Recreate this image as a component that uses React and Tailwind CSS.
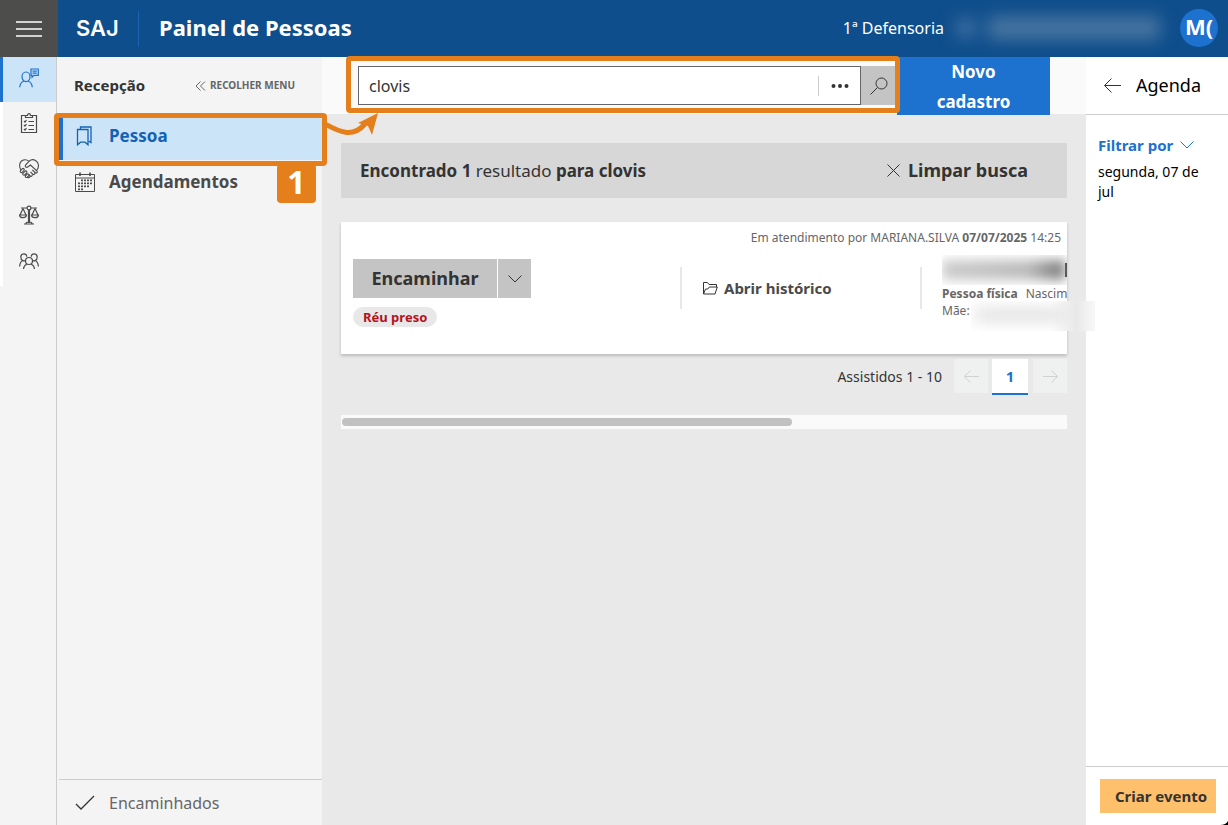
const railItems = [
  { id: 'recepcao', label: 'Recepção', Icon: PersonChatIcon, active: true },
  { id: 'tarefas', label: 'Tarefas', Icon: ClipboardIcon },
  { id: 'acordos', label: 'Acordos', Icon: HandshakeIcon },
  { id: 'processos', label: 'Processos', Icon: ScalesIcon },
  { id: 'equipe', label: 'Equipe', Icon: PeopleIcon },
];

function Svg({ children, size = 20, width, height, box = '0 0 20 20', stroke = 1, className = '' }) {
  return (
    <svg
      width={width || size}
      height={height || size}
      viewBox={box}
      fill="none"
      stroke="currentColor"
      strokeWidth={stroke}
      className={`shrink-0 ${className}`}
      aria-hidden="true"
    >
      {children}
    </svg>
  );
}

function PersonChatIcon() {
  return (
    <Svg stroke={1.2}>
      <ellipse cx="7" cy="8.800" rx="4" ry="4.800" />
      <path d="M.7 19.300c.3-3.300 2-5.500 4.300-6.300M9 13c2.500.8 4 3 4.300 6.300" />
      <path d="M12 1h7.300v6.300h-4.300l-2 2v-2h-1zM13.500 3.200h4.300M13.500 5.200h4.300" />
    </Svg>
  );
}

function ClipboardIcon() {
  return (
    <Svg stroke={1.2}>
      <path d="M6.500 2.500h-4v17h15v-17h-4M6.500 4.500v-2h2c0-2.500 3-2.500 3 0h2v2z" />
      <path d="M5 8l1 1 1.500-2M5 12l1 1 1.500-2M5 16l1 1 1.500-2M9.500 8.500h5.500M9.500 12.500h5.500M9.500 16.500h5.500" />
    </Svg>
  );
}

function HandshakeIcon() {
  return (
    <Svg stroke={1.1}>
      <path d="M2 11C-.5 7 .5 2 4.500 1c2-.5 4 0 5.500 1.300C12 .5 14.500.3 16.500 1.500 20 3.500 20.500 8 17.500 11.500" />
      <path d="M10 2.300L6.500 6c-1 1.500.8 3 2.200 2l2.800-2 6.500 6c1 1.300-.6 2.700-1.700 1.700l-3-2.700M15.500 13.500c1 1.300-.5 2.700-1.700 1.700l-2.300-2.200M13 15.500c.7 1.300-.7 2.500-1.800 1.500l-1.500-1.500M11 17.500c-.5 1.300-2 1.500-3 .5" />
      <path d="M1.500 11.500l1.700-1.700c1.300-1 2.600.3 1.800 1.500l-1.700 1.900c-1.300 1-2.800-.4-1.800-1.700zM4 14.300l1.900-2c1.300-1 2.600.3 1.700 1.500l-1.700 2c-1.300 1-2.800-.3-1.900-1.500zM6.500 16.800l1.400-1.500c1.300-1 2.500.3 1.700 1.500l-1.300 1.400c-1.200.9-2.500-.3-1.800-1.400z" />
    </Svg>
  );
}

function ScalesIcon() {
  return (
    <Svg stroke={1.2}>
      <circle cx="10" cy="3" r="1.900" />
      <path d="M2 3h6M12 3h6M9.500 5v13M10.500 5v13M5 19h10M7 18.500c0-1 1.500-1.500 3-1.500s3 .5 3 1.500" />
      <path d="M4 3.500L1 10M4 3.500L7 10M.5 10h7c-.3 3.500-6.700 3.500-7 0zM16 3.500L13 10M16 3.500l3 6.500M12.500 10h7c-.3 3.500-6.700 3.500-7 0z" />
    </Svg>
  );
}

function PeopleIcon() {
  return (
    <Svg stroke={1.200}>
      <circle cx="10" cy="10" r="3.500" />
      <path d="M4.500 18c.2-2.500 1.500-4 3.300-4.700M15.500 18c-.2-2.500-1.500-4-3.300-4.700" />
      <path d="M7.800 5.800C7.500 1.500 1.800 2 1.800 6c0 1.800.8 3 1.900 3.500C1.800 10.500.8 12.500.6 15.500M3.700 9.500c1 .6 2 .6 2.800 0M12.200 5.800c.3-4.300 6-3.800 6 .2 0 1.800-.8 3-1.900 3.500 1.900 1 2.900 3 3.100 6M16.300 9.500c-1 .6-2 .6-2.800 0" />
    </Svg>
  );
}

function BookmarkIcon() {
  return (
    <Svg stroke={1.300} className="text-[#1263b5]">
      <path d="M2.500 3.500h10.500v15.300l-3-2.600h-4.500l-3 2.600z" />
      <path d="M5.500 3V1h10.500v15.500l-2.500-1.500" />
    </Svg>
  );
}

function CalendarIcon() {
  const days = [
    [7, 8], [10, 8], [13, 8], [16, 8],
    [4, 11], [7, 11], [10, 11], [13, 11], [16, 11],
    [4, 14], [7, 14], [10, 14], [13, 14],
    [4, 17], [7, 17],
  ];
  return (
    <Svg>
      <path d="M.5 2.500h19v17H.5zM.5 6h19" />
      <path d="M5 .5v3.500M15 .5v3.500" strokeWidth="1.600" />
      {days.map(([x, y]) => (
        <rect key={`${x}-${y}`} x={x - 1} y={y - 0.500} width="2" height="1.700" fill="currentColor" stroke="none" />
      ))}
    </Svg>
  );
}

function FolderIcon() {
  return (
    <Svg width={15} height={13} box="0 0 15 13" className="text-[#333]">
      <path d="M.5 12V.5h4l1.500 2h7.500v2.500M.5 12h11.500l2.300-7h-8l-1.500 2h-2.300z" />
    </Svg>
  );
}

function ChevronIcon({ className }) {
  return (
    <Svg width={14} height={8} box="0 0 14 8" className={className}>
      <path d="M.5.5l6.500 6.500L13.500.5" />
    </Svg>
  );
}

function ArrowIcon({ right = false, width = 17, className = '' }) {
  return (
    <Svg width={width} height={15} box="0 0 17 15" className={className}>
      {right ? <path d="M0 7.500h16M9.500.5l7 7-7 7" /> : <path d="M17 7.500H1M7.500.5l-7 7 7 7" />}
    </Svg>
  );
}

function Header() {
  return (
    <header className="flex h-[57px] shrink-0 items-center bg-[#0f4e8c] text-white">
      <button type="button" aria-label="Menu" className="flex h-full w-[58px] items-center justify-center bg-[#4d4d4b]">
        <Svg width={26} height={16} box="0 0 26 16" stroke={1.600}>
          <path d="M0 1h26M0 8h26M0 15h26" />
        </Svg>
      </button>
      <div className="flex h-9 w-[81px] items-center border-r border-[#1c62b0] pl-[18px] font-['Inter',sans-serif] text-[22px] font-semibold">
        SAJ
      </div>
      <h1 className="ml-5 pb-0.5 text-[22px] font-bold">Painel de Pessoas</h1>
      <div className="ml-auto flex items-center pr-2.5 pb-0.5">
        <span className="text-base">1ª Defensoria</span>
        <div className="mr-4 ml-2 flex h-9 w-[212px] items-center gap-3 px-1 blur-[8px]">
          <div className="h-5 w-5 bg-[#3a6da0]" />
          <div className="h-6 flex-1 bg-[#45739f]" />
        </div>
        <button type="button" className="size-[38px] overflow-hidden rounded-full bg-[#1d71cf] pb-0.5 text-[22px] font-bold">
          M(
        </button>
      </div>
    </header>
  );
}

function Rail() {
  return (
    <nav className="w-[57px] shrink-0 border-r border-[#ccc] bg-[#f4f4f4]">
      {railItems.map(({ id, label, Icon, active }) => (
        <a
          key={id}
          href={`#${id}`}
          aria-label={label}
          className={
            active
              ? 'flex h-[45px] items-center border-l-3 border-[#1d71cf] bg-[#cce4f8] pb-1 pl-4 text-[#1d71cf]'
              : 'flex h-[46px] items-center border-l-3 border-white pb-1 pl-4 text-[#4a4a4a]'
          }
        >
          <Icon />
        </a>
      ))}
    </nav>
  );
}

function Sidebar() {
  return (
    <nav className="relative z-20 flex w-[265px] shrink-0 flex-col bg-[#f4f4f4] pl-0.5 text-[#4a4a4a]">
      <div className="flex h-[57px] items-center pl-[15px]">
        <h2 className="text-[15px] font-bold text-[#333]">Recepção</h2>
        <button type="button" className="mr-[27px] ml-auto flex items-center gap-1 text-[10px] font-bold text-[#666]">
          <Svg width={11} height={10} box="0 0 11 10">
            <path d="M5.500.5L1 5l4.500 4.500M10 .5L5.500 5l4.500 4.500" />
          </Svg>
          RECOLHER MENU
        </button>
      </div>

      <div className="relative">
        <a href="#pessoa" className="flex h-[46px] items-center gap-[14px] border-l-4 border-[#1d71cf] bg-[#cce4f8] pb-0.5 pl-3 text-[17px] font-bold text-[#1263b5]">
          <BookmarkIcon />
          Pessoa
        </a>
        <div className="pointer-events-none absolute -inset-x-[5px] -top-px h-[53px] rounded-sm border-5 border-[#e57f1b]" />
        <span className="absolute top-[50px] right-1.5 z-10 flex h-[39px] w-[39px] items-center justify-center rounded-sm bg-[#e57f1b] pb-1 font-['Open_Sans',sans-serif] text-[32px] font-bold text-white">
          1
        </span>
        <svg width="56" height="30" viewBox="0 0 56 30" fill="none" className="pointer-events-none absolute -top-1 -right-[58px] z-20 text-[#e57f1b]">
          <path d="M1 14C14 21 28 29 41 14" stroke="currentColor" strokeWidth="5" />
          <path d="M54 3L34 13l10 3 4 9z" fill="currentColor" />
        </svg>
      </div>
      <a href="#agendamentos" className="flex h-[46px] items-center gap-[14px] pb-0.5 pl-4 text-[17px] font-bold">
        <CalendarIcon />
        Agendamentos
      </a>

      <a href="#encaminhados" className="mt-auto flex h-[46px] items-center gap-[14px] border-t border-[#ccc] pl-4 text-base text-[#666]">
        <Svg stroke={1.300} className="text-[#333]">
          <path d="M1 11l5 5L19 3" />
        </Svg>
        Encaminhados
      </a>
    </nav>
  );
}

function SearchBar() {
  return (
    <div className="flex h-[57px] items-center bg-[#fafafa] pr-9 pl-9">
      <form className="relative flex h-[39px] flex-1" role="search">
        <div className="flex flex-1 items-center border border-[#666] bg-white">
          <input
            type="text"
            aria-label="Buscar pessoa"
            defaultValue="clovis"
            className="h-full min-w-0 flex-1 pl-[10px] text-base text-[#333] outline-none"
          />
          <button type="button" aria-label="Mais opções" className="flex h-5 w-[42px] items-center justify-center border-l border-[#ccc] text-[#333]">
            <svg width="18" height="4" viewBox="0 0 18 4" fill="currentColor">
              <circle cx="2.500" cy="2" r="2" />
              <circle cx="9" cy="2" r="2" />
              <circle cx="15.500" cy="2" r="2" />
            </svg>
          </button>
        </div>
        <button type="button" aria-label="Buscar" className="flex w-9 items-center justify-center bg-[#c4c4c4] text-[#333]">
          <Svg size={18} box="0 0 18 18">
            <circle cx="11.500" cy="6.500" r="5.500" />
            <path d="M7.500 10.500L.5 17.500" />
          </Svg>
        </button>
        <div className="pointer-events-none absolute -top-2.5 -right-[3px] -bottom-2 -left-3 z-10 rounded-sm border-5 border-[#e57f1b]" />
      </form>
      <button type="button" className="h-[58px] w-[153px] self-start bg-[#1d71cf] px-6 text-[17px] leading-[30px] font-bold text-white">
        Novo cadastro
      </button>
    </div>
  );
}

function PersonCard() {
  return (
    <article className="mt-6 h-[132px] bg-white shadow-[0_2px_3px_#bbb]">
      <p className="pt-2 pr-1.5 text-right text-xs leading-4 text-[#666]">
        Em atendimento por MARIANA.SILVA <b>07/07/2025</b> 14:25
      </p>
      <div className="flex pt-[13px] pl-3">
        <div className="min-w-[178px] flex-1">
          <div className="flex h-[39px] gap-px text-[#333]">
            <button type="button" className="w-36 bg-[#c4c4c4] text-[18px] font-bold">Encaminhar</button>
            <button type="button" aria-label="Mais ações" className="flex w-[33px] items-center justify-center bg-[#c4c4c4]">
              <ChevronIcon />
            </button>
          </div>
          <span className="mt-[9px] inline-flex h-5 items-center rounded-full bg-[#e8e8e8] px-[10px] pt-0.5 text-[13px] font-bold text-[#b5121b]">
            Réu preso
          </span>
        </div>
        <div className="mt-2 flex h-[42px] w-[240px] items-center border-l-2 border-[#e8e8e8] pl-[21px]">
          <button type="button" className="flex items-center gap-1.5 text-[15px] font-bold text-[#4a4a4a]">
            <FolderIcon />
            Abrir histórico
          </button>
        </div>
        <div className="mt-2 h-[42px] w-[147px] border-l-2 border-[#e8e8e8] pl-5 text-xs leading-[17px] text-[#666]">
          <div className="relative -mt-3 flex h-[30px] items-center overflow-hidden">
            <div className="h-5 flex-1 bg-gradient-to-r from-[#ccc] via-[#bbb] via-70% to-[#777] blur-[6px]" />
            <div className="h-[14px] w-0.5 bg-[#444]" />
          </div>
          <div className="flex gap-2 whitespace-nowrap">
            <b>Pessoa física</b>
            <span>Nascim</span>
          </div>
          <div className="relative">
            Mãe:
            <div className="absolute -top-px -right-7 h-[30px] w-[124px] overflow-hidden bg-gradient-to-r from-white from-65% via-[#e9e9e9] via-85% to-[#f8f8f8]">
              <div className="mt-2 ml-1 h-3 w-[90px] bg-[#dcdcdc] blur-[8px]" />
            </div>
          </div>
        </div>
      </div>
    </article>
  );
}

function Pagination() {
  return (
    <div className="mt-[5px] flex items-start justify-end text-[#333]">
      <span className="mr-3 text-[14px] leading-9">Assistidos 1 - 10</span>
      <button type="button" aria-label="Página anterior" className="flex size-[34px] items-center justify-center bg-[#eff1f1] text-[#ccc]">
        <ArrowIcon width={15} />
      </button>
      <button type="button" className="mr-[5px] ml-1 h-9 w-9 border-b-2 border-[#1d71cf] bg-white text-[15px] font-bold text-[#1d71cf]">
        1
      </button>
      <button type="button" aria-label="Próxima página" className="flex size-[34px] items-center justify-center bg-[#eff1f1] text-[#ccc]">
        <ArrowIcon right width={15} />
      </button>
    </div>
  );
}

function Agenda() {
  return (
    <aside className="relative flex w-[142px] shrink-0 flex-col bg-white text-black">
      <div className="flex h-[58px] items-center gap-[15px] border-b border-[#ccc] pl-[18px]">
        <button type="button" aria-label="Voltar" className="text-[#333]">
          <ArrowIcon />
        </button>
        <h2 className="text-[18px]">Agenda</h2>
      </div>
      <div className="px-3 pt-5">
        <button type="button" className="flex items-center gap-[7px] text-[15px] leading-5 font-bold text-[#1d71cf]">
          Filtrar por
          <ChevronIcon />
        </button>
        <p className="mt-[7px] text-[14px] leading-5">segunda, 07 de jul</p>
      </div>
      <div className="mt-auto border-t border-[#ccc] px-3 py-3 pl-[14px]">
        <button type="button" className="h-[34px] w-full bg-[#ffc06c] pl-1.5 text-[15px] font-bold text-[#333]">
          Criar evento
        </button>
      </div>
      <svg width="8" height="4" viewBox="0 0 8 4" className="absolute right-0 bottom-0">
        <path d="M0 4Q6 4 8 0V4z" fill="#000" />
      </svg>
    </aside>
  );
}

export default function App() {
  return (
    <div className="flex min-h-screen flex-col font-['Noto_Sans',sans-serif]">
      <Header />
      <div className="flex flex-1">
        <Rail />
        <Sidebar />
        <main className="relative z-10 min-w-0 flex-1 bg-[#e9e9e9]">
          <SearchBar />
          <div className="px-[19px] pt-[29px]">
            <div className="flex h-[55px] items-center justify-between bg-[#d7d7d7] pr-[39px] pl-[19px] text-[17px] text-[#333]">
              <p>
                <b>Encontrado 1</b> resultado <b>para clovis</b>
              </p>
              <button type="button" className="flex items-center gap-2 text-[18px] font-bold">
                <Svg size={13} box="0 0 13 13">
                  <path d="M.5.5l12 12M12.500.5l-12 12" />
                </Svg>
                Limpar busca
              </button>
            </div>
            <PersonCard />
            <Pagination />
            <div className="mt-5 bg-[#fafafa] py-[3px] pl-px">
              <div className="h-2 w-[62%] rounded-full bg-[#c1c1c1]" />
            </div>
          </div>
        </main>
        <Agenda />
      </div>
    </div>
  );
}
